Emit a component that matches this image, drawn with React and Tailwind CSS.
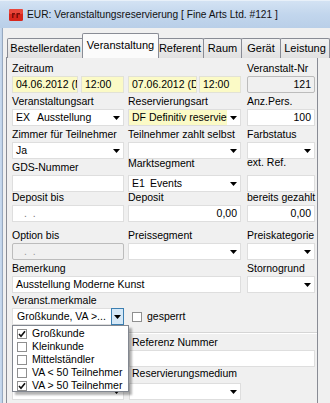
import React from "react";

function Arrow() {
  return (
    <svg width="7" height="4" viewBox="0 0 7 4" className="block">
      <path d="M0 0h7L3.5 4z" fill="#000" />
    </svg>
  );
}

function Box({ w, children, yellow, disabled, align = "left", className = "" }) {
  const bg = disabled ? "bg-[#f0f0f0] border-[#bcbcbc] rounded-[2px]" : yellow ? "bg-[#fbfac6] border-[#e2e2d6]" : "bg-white border-[#dedede]";
  return (
    <div
      className={`h-[17px] border ${bg} flex items-center px-[3px] overflow-hidden whitespace-nowrap ${align === "right" ? "justify-end" : ""} ${className}`}
      style={w ? { width: w } : undefined}
    >
      {children}
    </div>
  );
}

function Combo({ w, children, yellow, className = "" }) {
  return (
    <div className={`h-[17px] border border-[#dedede] bg-white flex items-center overflow-hidden whitespace-nowrap ${className}`} style={{ width: w }}>
      <div className={`flex-1 min-w-0 h-full flex items-center pl-[3px] overflow-hidden ${yellow ? "bg-[#fbfac6]" : ""}`}>{children}</div>
      <div className="w-[13px] shrink-0 h-full flex items-center justify-center">
        <Arrow />
      </div>
    </div>
  );
}

function Check({ checked }) {
  return (
    <div className="w-[10px] h-[10px] border border-[#8f8f8f] bg-white flex items-center justify-center shrink-0">
      {checked && (
        <svg width="8" height="8" viewBox="0 0 8 8" className="block">
          <path d="M1 4 L3 6.3 L7 1.2" stroke="#111" strokeWidth="1.6" fill="none" />
        </svg>
      )}
    </div>
  );
}

function Label({ children, className = "" }) {
  return <div className={`h-[13px] leading-[13px] whitespace-nowrap mb-[1px] ${className}`}>{children}</div>;
}

function Tab({ w, children, selected }) {
  if (selected) {
    return (
      <div
        className="h-[25px] -mx-[2px] z-10 border border-b-0 border-[#898c95] bg-[#fbfbfb] flex items-center justify-center pb-[2px] rounded-t-[2px] text-[11px]"
        style={{ width: w + 4 }}
      >
        {children}
      </div>
    );
  }
  return (
    <div
      className="h-[20px] border border-b-0 border-[#898c95] bg-gradient-to-b from-[#f2f2f2] to-[#e1e1e1] flex items-center justify-center rounded-t-[2px] text-[11px] -ml-[1px] first:ml-0"
      style={{ width: w }}
    >
      {children}
    </div>
  );
}

export default function App() {
  return (
    <div className="w-[330px] h-[403px] overflow-hidden bg-[#c3d6ec] font-['Liberation_Sans',Arial,sans-serif] text-[10.5px] text-black relative">
      {/* title bar */}
      <div className="h-[28px] flex items-center pl-[9px] gap-[4px] bg-gradient-to-b from-[#d3e2f3] via-[#c2d6ed] to-[#b9cfe8] border-t border-[#e8f0f9]">
        <svg width="14" height="12" viewBox="0 0 14 12" className="block shrink-0">
          <rect x="0" y="0" width="14" height="12" rx="1.5" fill="#d7261c" />
          <rect x="0" y="0" width="14" height="5" rx="1.5" fill="#e8463a" />
          <path d="M3 4h3v1.5H4.5V9H3z M7.5 4h3.5v1.5H9V9H7.5z" fill="#7a0f0a" />
        </svg>
        <span className="text-[10.2px] text-[#111]">EUR: Veranstaltungsreservierung [ Fine Arts Ltd. #121 ]</span>
      </div>
      <div className="flex h-[375px]">
        <div className="w-[8px] h-full bg-gradient-to-r from-[#d6e4f4] via-[#b8cde6] to-[#c9d9ec] border-r border-[#97a9c0]" />
        <div className="flex-1 bg-[#f0f0f0] pl-[3px] pt-[5px]">
          {/* tabs */}
          <div className="flex items-end h-[25px] pl-[1px] relative">
            <Tab w={77}>Bestellerdaten</Tab>
            <Tab w={73} selected>Veranstaltung</Tab>
            <Tab w={48}>Referent</Tab>
            <Tab w={39}>Raum</Tab>
            <Tab w={40}>Gerät</Tab>
            <Tab w={50}>Leistung</Tab>
          </div>
          {/* panel */}
          <div className="w-[312px] h-[360px] -mt-[1px] border border-[#898c95] bg-[#f0f0f0] pl-[5px] pr-[2px]">
            {/* row 1 */}
            <div className="h-[35px] flex items-end">
              <div className="w-[112px]">
                <Label>Zeitraum</Label>
                <div className="flex gap-[3px]">
                  <Box w={66} yellow>04.06.2012 (Mo)</Box>
                  <Box w={43} yellow>12:00</Box>
                </div>
              </div>
              <div className="w-[113px] ml-[4px]">
                <Label>&nbsp;</Label>
                <div className="flex gap-[2px]">
                  <Box w={69} yellow>07.06.2012 (Do)</Box>
                  <Box w={42} yellow>12:00</Box>
                </div>
              </div>
              <div className="w-[68px] ml-[6px]">
                <Label>Veranstalt-Nr</Label>
                <Box disabled align="right">121</Box>
              </div>
            </div>
            {/* row 2 */}
            <div className="h-[33px] flex items-end">
              <div className="w-[112px]">
                <Label>Veranstaltungsart</Label>
                <Combo w={112}>
                  <span className="w-[21px] shrink-0">EX</span>
                  <span>Ausstellung</span>
                </Combo>
              </div>
              <div className="w-[113px] ml-[4px]">
                <Label>Reservierungsart</Label>
                <Combo w={113} yellow>
                  <span className="w-[17px] shrink-0">DF</span>
                  <span className="shrink-0">Definitiv reserviert</span>
                </Combo>
              </div>
              <div className="w-[68px] ml-[6px]">
                <Label>Anz.Pers.</Label>
                <Box align="right">100</Box>
              </div>
            </div>
            {/* row 3 */}
            <div className="h-[33px] flex items-end">
              <div className="w-[112px]">
                <Label>Zimmer für Teilnehmer</Label>
                <Combo w={112}>Ja</Combo>
              </div>
              <div className="w-[113px] ml-[4px]">
                <Label>Teilnehmer zahlt selbst</Label>
                <Combo w={113} />
              </div>
              <div className="w-[68px] ml-[6px]">
                <Label>Farbstatus</Label>
                <Combo w={68} />
              </div>
            </div>
            {/* row 4 */}
            <div className="h-[33px] flex items-end">
              <div className="w-[112px]">
                <Label>GDS-Nummer</Label>
                <Box />
              </div>
              <div className="w-[113px] ml-[4px]">
                <Label className="mb-[5px]">Marktsegment</Label>
                <Combo w={113}>
                  <span className="w-[18px] shrink-0">E1</span>
                  <span>Events</span>
                </Combo>
              </div>
              <div className="w-[68px] ml-[6px]">
                <Label className="mb-[6px]">ext. Ref.</Label>
                <Box />
              </div>
            </div>
            {/* row 5 */}
            <div className="h-[30px] flex items-end">
              <div className="w-[112px]">
                <Label>Deposit bis</Label>
                <Box>
                  <span className="pl-[8px] text-[#777]">.&nbsp;&nbsp;.</span>
                </Box>
              </div>
              <div className="w-[113px] ml-[4px]">
                <Label>Deposit</Label>
                <Box align="right">0,00</Box>
              </div>
              <div className="w-[68px] ml-[6px]">
                <Label>bereits gezahlt</Label>
                <Box align="right">0,00</Box>
              </div>
            </div>
            {/* row 6 */}
            <div className="h-[38px] flex items-end">
              <div className="w-[112px]">
                <Label>Option bis</Label>
                <Box disabled>
                  <span className="pl-[8px] text-[#999]">.&nbsp;&nbsp;.</span>
                </Box>
              </div>
              <div className="w-[113px] ml-[4px]">
                <Label>Preissegment</Label>
                <Combo w={113} />
              </div>
              <div className="w-[68px] ml-[6px]">
                <Label>Preiskategorie</Label>
                <Combo w={68} />
              </div>
            </div>
            {/* row 7 */}
            <div className="h-[33px] flex items-end">
              <div className="w-[229px]">
                <Label>Bemerkung</Label>
                <Box>Ausstellung Moderne Kunst</Box>
              </div>
              <div className="w-[68px] ml-[6px]">
                <Label>Stornogrund</Label>
                <Combo w={68} />
              </div>
            </div>
            {/* row 8 */}
            <div className="h-[32px] flex items-end relative z-20">
              <div className="w-[112px] relative">
                <Label>Veranst.merkmale</Label>
                <div className="h-[17px] border border-[#dedede] bg-white flex items-center">
                  <div className="flex-1 pl-[4px] whitespace-nowrap overflow-hidden">Großkunde, VA &gt;...</div>
                  <div className="w-[13px] h-[17px] -my-[1px] -mr-[1px] border border-[#3c7fb1] bg-[#d5e8f7] flex items-center justify-center">
                    <Arrow />
                  </div>
                </div>
                {/* dropdown list */}
                <div className="absolute left-0 top-full w-[117px] h-[67px] bg-white border border-[#828790] shadow-[3px_3px_2px_rgba(0,0,0,0.3)] pt-[1px]">
                  {[
                    ["Großkunde", true],
                    ["Kleinkunde", false],
                    ["Mittelständler", false],
                    ["VA < 50 Teilnehmer", false],
                    ["VA > 50 Teilnehmer", true],
                  ].map(([t, c]) => (
                    <div key={t} className="h-[13px] flex items-center pl-[4px] gap-[5px] whitespace-nowrap">
                      <Check checked={c} />
                      <span>{t}</span>
                    </div>
                  ))}
                </div>
              </div>
              <div className="ml-[8px] h-[17px] flex items-center gap-[5px]">
                <Check />
                <span>gesperrt</span>
              </div>
            </div>
            {/* lower section */}
            <div className="flex">
              <div className="w-[112px] pt-[58px]">
                <Combo w={112} />
              </div>
              <div className="flex-1 ml-[5px] -mr-[2px] pt-[7px]">
                <div className="h-[2px] border-t border-[#d5d5d5] border-b border-b-white" />
                <div className="pl-[3px] mt-[2px]">
                  <Label className="mb-0">Referenz Nummer</Label>
                </div>
                <div className="pr-[2px]">
                  <Box className="h-[16px]" />
                </div>
                <div className="pl-[3px]">
                  <Label>Reservierungsmedium</Label>
                </div>
                <Combo w={112} className="mt-[3px]" />
              </div>
            </div>
          </div>
        </div>
      </div>
    </div>
  );
}
